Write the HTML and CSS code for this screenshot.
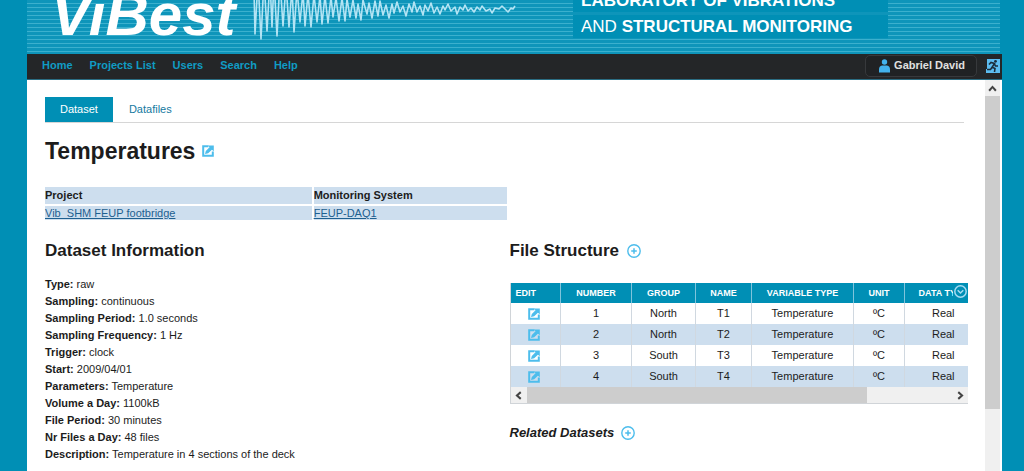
FILE: index.html
```html
<!DOCTYPE html>
<html lang="en">
<head>
<meta charset="utf-8">
<title>ViBest - Temperatures</title>
<link rel="stylesheet" href="styles.css">
</head>
<body>
<svg class="defs" aria-hidden="true">
  <symbol id="edit" viewBox="0 0 12 12">
    <path d="M6.500 1.300H1.200V10.800H10.800V6.500" fill="none" stroke="currentColor" stroke-width="2"/>
    <path d="M3 9L3.800 6L7.500 2.300L6 .600H11.800V6.300L9.900 4.700L6.200 8.300Z" fill="currentColor"/>
  </symbol>
  <symbol id="plus" viewBox="0 0 14 14">
    <circle cx="7" cy="7" r="6.2" fill="none" stroke="currentColor" stroke-width="1.4"/>
    <path d="M7 4.2V9.8M4.2 7H9.8" stroke="currentColor" stroke-width="1.5"/>
  </symbol>
  <symbol id="chevron" viewBox="0 0 8 8">
    <path d="M1 6L4 2.6L7 6" fill="none" stroke="#444" stroke-width="1.8"/>
  </symbol>
</svg>
<div class="page">
  <header class="banner">
    <div class="logo">ViBest</div>
    <svg class="wave" viewBox="0 0 262 40" aria-hidden="true">
      <path d="M0 -10L1 34L4 -20L7 39L10 -20L13 31L16 -20L18 27L20 -20L23 36L26 -20L29 26L32 -15L35 27L38 -12L40 32L43 -10L46 22L49 -8L51 26L54 -6L57 27L60 -5L63 22L66 -4L68 24L71 -4L74 23L77 -3L79 17L82 -2L85 21L88 -2L91 21L93 -1L96 17L99 0L102 18L104 4L107 20L109 0L113 14L115 3L118 18L121 1L124 16L126 1L129 15L132 5L135 18L138 4L140 13L143 2L146 12L149 6L152 16L155 4L158 12L160 2L163 12L166 6L169 15L171 5L174 11L177 3L180 13L183 7L186 14L189 6L191 10L194 4L197 11L201 7L203 14L206 7L209 10L211 5L214 11L217 8L220 12L223 7L226 10L228 6L232 11L236 9L238 13L241 8L245 9L248 6L251 9L254 12L257 8L259 9L261 6"/>
    </svg>
    <div class="tagline">
      <span><b>LABORATORY OF VIBRATIONS</b></span>
      <span>AND <b>STRUCTURAL MONITORING</b></span>
    </div>
  </header>
  <nav class="nav">
    <a href="#">Home</a>
    <a href="#">Projects List</a>
    <a href="#">Users</a>
    <a href="#">Search</a>
    <a href="#">Help</a>
    <button class="user" type="button">
      <svg width="11" height="14" viewBox="0 0 11 14" aria-hidden="true"><circle cx="5.5" cy="3" r="2.7"/><path d="M0 13.5V10.500Q0 7 3 6.500H8Q11 7 11 10.500V13.500Z"/></svg>
      Gabriel David
    </button>
    <button class="exit" type="button" aria-label="Log out">
      <svg width="14" height="14" viewBox="0 0 14 14" aria-hidden="true">
        <path class="door" d="M1 0H14V14H0V10H1Z"/>
        <circle class="man" cx="9.500" cy="2.300" r="1.400"/>
        <path class="run" d="M3 5.500L5 3.500L8.500 4.500L6.200 8.200L9 9.500L8.500 13M6.300 8L4.500 10.500H1M8.500 5L9.500 7H12"/>
      </svg>
    </button>
  </nav>
  <div class="frame">
    <main class="main">
      <div class="tabs">
        <a class="tab active" href="#">Dataset</a>
        <a class="tab" href="#">Datafiles</a>
      </div>
      <h1>Temperatures <a href="#" aria-label="Edit dataset"><svg class="icon" aria-hidden="true"><use href="#edit"/></svg></a></h1>
      <table class="project">
        <thead><tr><th>Project</th><th>Monitoring System</th></tr></thead>
        <tbody><tr><td><a href="#">Vib_SHM FEUP footbridge</a></td><td><a href="#">FEUP-DAQ1</a></td></tr></tbody>
      </table>
      <div class="columns">
        <section>
          <h2>Dataset Information</h2>
          <ul class="info">
            <li><b>Type:</b> raw</li>
            <li><b>Sampling:</b> continuous</li>
            <li><b>Sampling Period:</b> 1.0 seconds</li>
            <li><b>Sampling Frequency:</b> 1 Hz</li>
            <li><b>Trigger:</b> clock</li>
            <li><b>Start:</b> 2009/04/01</li>
            <li><b>Parameters:</b> Temperature</li>
            <li><b>Volume a Day:</b> 1100kB</li>
            <li><b>File Period:</b> 30 minutes</li>
            <li><b>Nr Files a Day:</b> 48 files</li>
            <li><b>Description:</b> Temperature in 4 sections of the deck</li>
          </ul>
        </section>
        <section>
          <h2>File Structure <a href="#" aria-label="Add column"><svg class="icon-add" aria-hidden="true"><use href="#plus"/></svg></a></h2>
          <div class="grid">
            <table>
              <colgroup><col class="c-edit"><col class="c-number"><col class="c-group"><col class="c-name"><col class="c-var"><col class="c-unit"><col class="c-data"></colgroup>
              <thead><tr><th class="first">EDIT</th><th>NUMBER</th><th>GROUP</th><th>NAME</th><th>VARIABLE TYPE</th><th>UNIT</th><th>DATA TYPE</th></tr></thead>
              <tbody>
                <tr><td><a href="#" aria-label="Edit 1"><svg class="icon" aria-hidden="true"><use href="#edit"/></svg></a></td><td>1</td><td>North</td><td>T1</td><td>Temperature</td><td>ºC</td><td>Real</td></tr>
                <tr><td><a href="#" aria-label="Edit 2"><svg class="icon" aria-hidden="true"><use href="#edit"/></svg></a></td><td>2</td><td>North</td><td>T2</td><td>Temperature</td><td>ºC</td><td>Real</td></tr>
                <tr><td><a href="#" aria-label="Edit 3"><svg class="icon" aria-hidden="true"><use href="#edit"/></svg></a></td><td>3</td><td>South</td><td>T3</td><td>Temperature</td><td>ºC</td><td>Real</td></tr>
                <tr><td><a href="#" aria-label="Edit 4"><svg class="icon" aria-hidden="true"><use href="#edit"/></svg></a></td><td>4</td><td>South</td><td>T4</td><td>Temperature</td><td>ºC</td><td>Real</td></tr>
              </tbody>
            </table>
            <button class="menu" type="button" aria-label="Column menu">
              <svg width="13" height="13" viewBox="0 0 13 13" aria-hidden="true"><circle cx="6.500" cy="6.500" r="5.700"/><path d="M3.700 5.300L6.500 8L9.300 5.300"/></svg>
            </button>
            <div class="hbar">
              <button type="button" aria-label="Scroll left"><svg class="chev left" aria-hidden="true"><use href="#chevron"/></svg></button>
              <div class="track"><div class="thumb"></div></div>
              <button type="button" aria-label="Scroll right"><svg class="chev right" aria-hidden="true"><use href="#chevron"/></svg></button>
            </div>
          </div>
          <h3>Related Datasets <a href="#" aria-label="Add related dataset"><svg class="icon-add" aria-hidden="true"><use href="#plus"/></svg></a></h3>
        </section>
      </div>
    </main>
    <div class="vbar">
      <button type="button" aria-label="Scroll up"><svg class="chev" aria-hidden="true"><use href="#chevron"/></svg></button>
      <div class="vthumb"></div>
    </div>
  </div>
</div>
</body>
</html>
```
FILE: styles.css
```css
* { box-sizing: border-box; }

body {
  margin: 0;
  background: #008fb5;
  color: #1c1c1c;
  font: 11px/17px "Liberation Sans", Arial, sans-serif;
  overflow: hidden;
}

button { border: 0; padding: 0; margin: 0; background: none; font: inherit; }
.defs { display: none; }

.page {
  display: flex;
  flex-direction: column;
  height: 100vh;
  margin: 0 22px 0 27px;
}

/* Banner */
.banner {
  display: flex;
  align-items: flex-end;
  flex: none;
  height: 54px;
  margin-right: 2px;
  padding-left: 24px;
  overflow: hidden;
  color: #fff;
  background: repeating-linear-gradient(to top, #0e95ba 0 2px, #3bb0ce 2px 3px, #0e95ba 3px 4px);
}
.logo {
  width: 203px;
  flex: none;
  font-size: 60px;
  font-style: italic;
  font-weight: bold;
  line-height: 60px;
  padding-bottom: 9px;
}
.wave {
  flex: none;
  width: 262px;
  height: 40px;
  margin-bottom: 14px;
  overflow: visible;
  fill: none;
  stroke: #b4e4f4;
  stroke-width: 1.6;
  stroke-linejoin: round;
}
.tagline {
  display: flex;
  flex-direction: column;
  gap: 3px;
  width: 315px;
  margin: 0 0 16px 57px;
  font-size: 17px;
  line-height: 23px;
  white-space: nowrap;
}
.tagline span { padding-left: 8px; background: #008fb5; }

/* Navigation bar */
.nav {
  display: flex;
  align-items: center;
  gap: 17px;
  flex: none;
  height: 26px;
  padding: 0 2px 2px 15px;
  background: #242628;
  border-bottom: 1px solid #2b6d83;
  font-weight: bold;
}
.nav a { color: #109cc4; text-decoration: none; }
.user {
  display: flex;
  align-items: center;
  gap: 4px;
  height: 22px;
  margin-left: auto;
  margin-right: -8px;
  padding: 0 11px 0 13px;
  border: 1px solid #37393c;
  border-radius: 5px;
  background: #202224;
  color: #e0e0e0;
}
.user svg { fill: #43b2ec; }
.exit { display: flex; }
.door { fill: #5cbcf0; }
.man { fill: #1b2d3b; }
.run { fill: none; stroke: #1b2d3b; stroke-width: 1.6; }

/* Content frame */
.frame { display: flex; flex: 1; min-height: 0; padding-right: 2px; background: #fff; }
.main { flex: 1; min-width: 0; padding: 17px 17px 0 18px; overflow: hidden; }
.vbar { width: 15px; background: #f0f0f0; }
.vbar button { display: flex; align-items: center; justify-content: center; width: 100%; height: 16px; }
.vthumb { height: 80%; background: #cdcdcd; }
.chev { width: 9px; height: 9px; }
.left { transform: rotate(-90deg); }
.right { transform: rotate(90deg); }

.tabs { display: flex; gap: 1px; margin-right: 4px; border-bottom: 1px solid #d6d6d6; }
.tab { padding: 4px 15px; color: #157a9f; text-decoration: none; }
.active { background: #008fb5; color: #fff; }

h1, h2, h3 { display: flex; align-items: center; margin: 0; }
h1 { gap: 7px; margin-top: 15px; font-size: 23px; line-height: 26px; }
h2 { gap: 8px; font-size: 17px; line-height: 20px; }
h3 { gap: 7px; margin-top: 20px; font-size: 13px; line-height: 18px; font-style: italic; }
h1 a, h2 a, h3 a, .grid a { display: flex; justify-content: center; color: #4dbdec; }
.icon { width: 12px; height: 12px; }
.icon-add { width: 14px; height: 14px; }

.project { width: 50%; margin-top: 23px; border-collapse: collapse; table-layout: fixed; }
.project th, .project td { padding: 0; background: #cddeee; text-align: left; }
.project th { border-bottom: 2px solid #fff; }
.project td { line-height: 14px; }
.project th:first-child { width: 58%; }
.project tr > :first-child { border-right: 2px solid #fff; }
.project a { color: #1e6090; }

.columns { display: grid; grid-template-columns: repeat(2, minmax(0, 1fr)); gap: 6px; margin-top: 21px; }
.info { margin: 15px 0 0; padding: 0; list-style: none; }

/* Data grid */
.grid { position: relative; margin-top: 22px; overflow: hidden; border: solid #d0d4d8; border-width: 0 0 1px 1px; }
.grid table { width: 100%; min-width: 472px; border-collapse: collapse; table-layout: fixed; }
.grid th { height: 20px; padding: 0; border-right: 1px solid #7fc4dc; background: #008fb5; color: #fff; font-size: 9px; line-height: 18px; }
.grid th.first { padding-left: 5px; text-align: left; }
.grid td { height: 21px; padding: 0; border-right: 1px solid #d0d8e0; text-align: center; }
.grid td a { padding-right: 2px; }
.grid tbody tr:nth-child(even) { background: #cddeee; }
.c-edit { width: 50px; }
.c-number { width: 71px; }
.c-group { width: 64px; }
.c-name { width: 56px; }
.c-var { width: 102px; }
.c-unit { width: 51px; }
.menu { position: absolute; top: 0; right: 0; display: flex; align-items: center; width: 15px; height: 20px; padding: 0 0 3px 1px; background: #008fb5; }
.menu svg { fill: none; stroke: #a9dcf2; stroke-width: 1.5; }
.hbar { display: flex; height: 16px; background: #f0f0f0; }
.hbar button { display: flex; align-items: center; justify-content: center; width: 16px; }
.track { flex: 1; }
.thumb { width: 80%; height: 100%; background: #cdcdcd; }
```
